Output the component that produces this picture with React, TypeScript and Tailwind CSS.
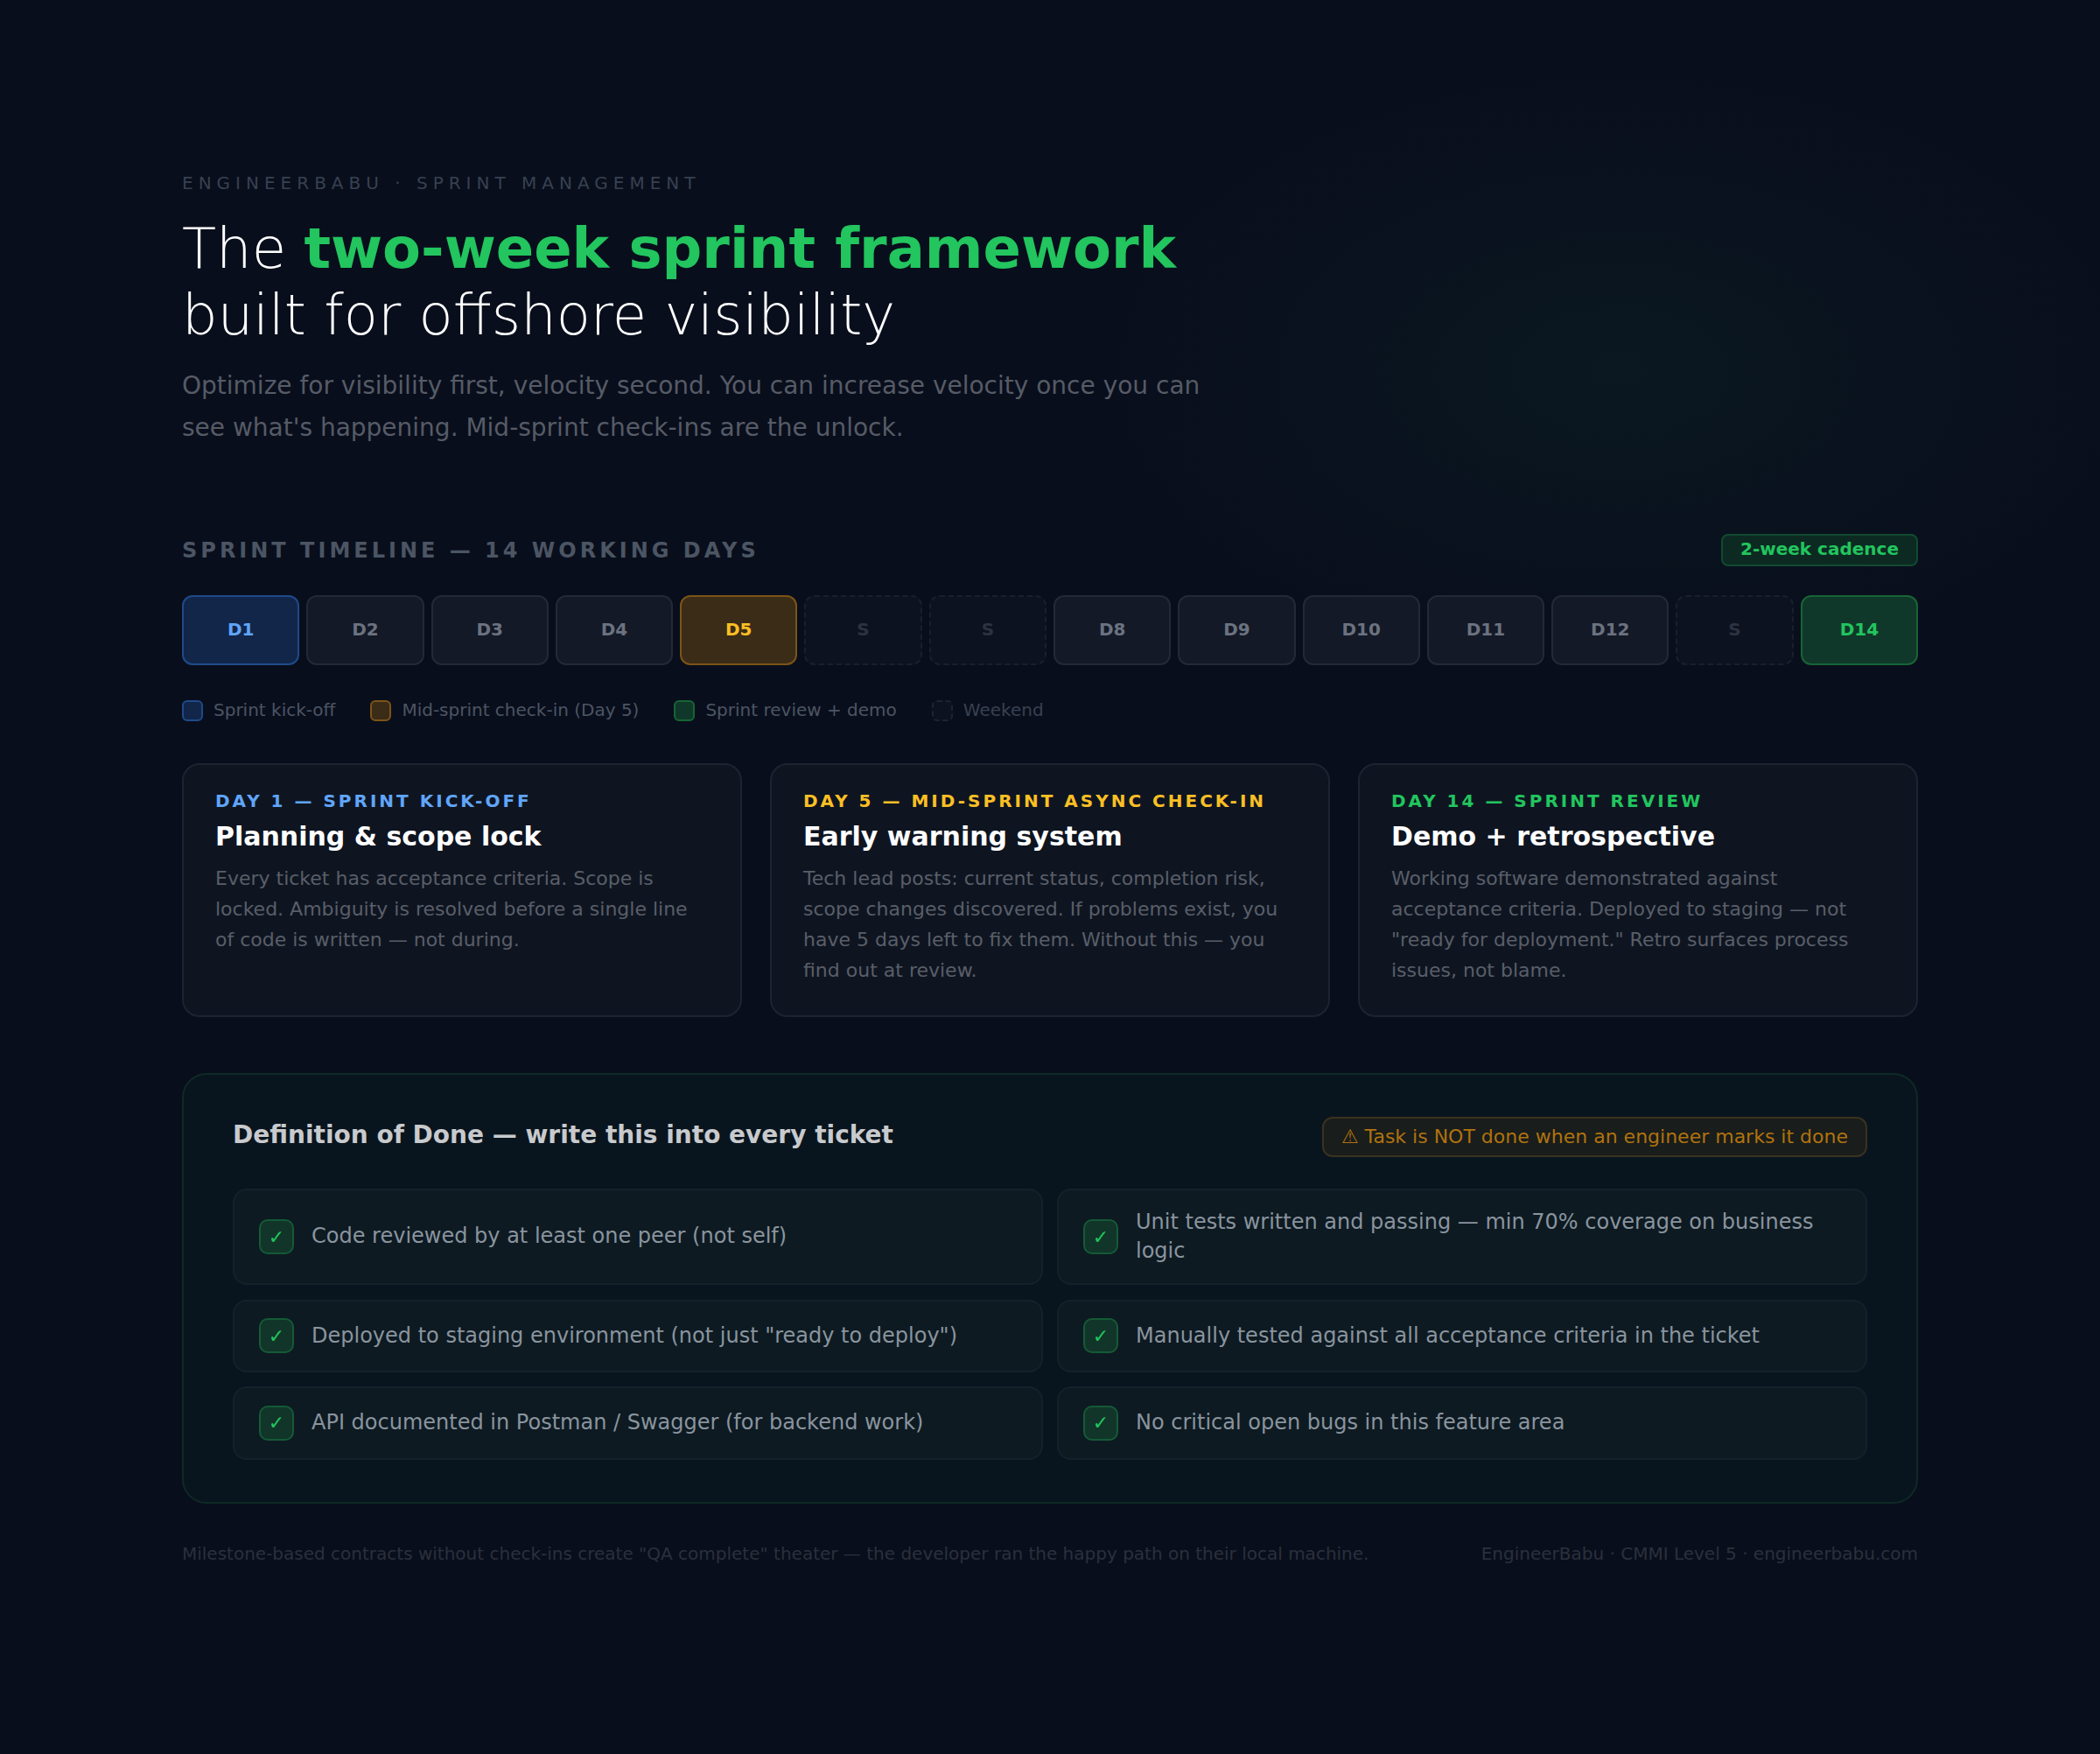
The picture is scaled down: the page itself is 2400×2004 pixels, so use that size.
const days = [
  { t: "D1", c: "border-[#1e4a8a] bg-[#12264a] text-[#60a5fa]" },
  { t: "D2", c: "border-[#232936] bg-[#131926] text-[#6b7280]" },
  { t: "D3", c: "border-[#232936] bg-[#131926] text-[#6b7280]" },
  { t: "D4", c: "border-[#232936] bg-[#131926] text-[#6b7280]" },
  { t: "D5", c: "border-[#7c5416] bg-[#3b2c18] text-[#fbbf24]" },
  { t: "S", c: "border-dashed border-[#1a1f2c] bg-[#0d1220] text-[#2c3240]" },
  { t: "S", c: "border-dashed border-[#1a1f2c] bg-[#0d1220] text-[#2c3240]" },
  { t: "D8", c: "border-[#232936] bg-[#131926] text-[#6b7280]" },
  { t: "D9", c: "border-[#232936] bg-[#131926] text-[#6b7280]" },
  { t: "D10", c: "border-[#232936] bg-[#131926] text-[#6b7280]" },
  { t: "D11", c: "border-[#232936] bg-[#131926] text-[#6b7280]" },
  { t: "D12", c: "border-[#232936] bg-[#131926] text-[#6b7280]" },
  { t: "S", c: "border-dashed border-[#1a1f2c] bg-[#0d1220] text-[#2c3240]" },
  { t: "D14", c: "border-[#166534] bg-[#10382a] text-[#22c55e]" },
];

const legend = [
  { t: "Sprint kick-off", c: "border-[#1e4a8a] bg-[#12264a]", x: "text-[#4b5563]" },
  { t: "Mid-sprint check-in (Day 5)", c: "border-[#7c5416] bg-[#3b2c18]", x: "text-[#4b5563]" },
  { t: "Sprint review + demo", c: "border-[#166534] bg-[#10382a]", x: "text-[#4b5563]" },
  { t: "Weekend", c: "border-dashed border-[#1f2430] bg-[#0d1220]", x: "text-[#374151]" },
];

const cards = [
  {
    l: "DAY 1 — SPRINT KICK-OFF",
    c: "text-[#60a5fa]",
    h: "Planning & scope lock",
    d: "Every ticket has acceptance criteria. Scope is locked. Ambiguity is resolved before a single line of code is written — not during.",
  },
  {
    l: "DAY 5 — MID-SPRINT ASYNC CHECK-IN",
    c: "text-[#fbbf24]",
    h: "Early warning system",
    d: "Tech lead posts: current status, completion risk, scope changes discovered. If problems exist, you have 5 days left to fix them. Without this — you find out at review.",
  },
  {
    l: "DAY 14 — SPRINT REVIEW",
    c: "text-[#22c55e]",
    h: "Demo + retrospective",
    d: 'Working software demonstrated against acceptance criteria. Deployed to staging — not "ready for deployment." Retro surfaces process issues, not blame.',
  },
];

const items = [
  "Code reviewed by at least one peer (not self)",
  "Unit tests written and passing — min 70% coverage on business logic",
  'Deployed to staging environment (not just "ready to deploy")',
  "Manually tested against all acceptance criteria in the ticket",
  "API documented in Postman / Swagger (for backend work)",
  "No critical open bugs in this feature area",
];

export default function App() {
  return (
    <div className="min-h-[2004px] bg-[#090e1c] bg-[radial-gradient(ellipse_600px_350px_at_1850px_424px,rgba(30,190,110,0.055),transparent)] px-[208px] pt-[197px] font-['DejaVu_Sans',sans-serif]">
      <div className="text-[20px] leading-[24px] tracking-[6px] text-[#374151]">ENGINEERBABU · SPRINT MANAGEMENT</div>
      <h1 className="mt-[25px] text-[64px] leading-[76px] font-extralight text-white">
        The <span className="font-bold text-[#22c55e]">two-week sprint framework</span>
        <br />
        built for offshore visibility
      </h1>
      <p className="mt-[19px] w-[1200px] text-[28px] leading-[48px] text-[#565b66]">
        Optimize for visibility first, velocity second. You can increase velocity once you can see what's happening. Mid-sprint check-ins are the unlock.
      </p>

      <div className="mt-[97px] flex h-[37px] items-center justify-between">
        <div className="pt-[1px] text-[24px] leading-[28px] font-bold tracking-[4px] text-[#4b5563]">SPRINT TIMELINE — 14 WORKING DAYS</div>
        <div className="rounded-[8px] border-2 border-[#124a30] bg-[#0c2a22] px-[20px] pt-[3px] pb-[6px] text-[20px] leading-[24px] font-bold text-[#22c55e]">2-week cadence</div>
      </div>

      <div className="mt-[33px] grid grid-cols-14 gap-[8px]">
        {days.map((d, i) => (
          <div key={i} className={`flex h-[80px] items-center justify-center rounded-[12px] border-2 pb-[2px] text-[20px] font-bold ${d.c}`}>
            {d.t}
          </div>
        ))}
      </div>

      <div className="mt-[40px] flex items-center gap-[40px]">
        {legend.map((l) => (
          <div key={l.t} className="flex items-center gap-[12px]">
            <span className={`h-[24px] w-[24px] rounded-[6px] border-2 ${l.c}`} />
            <span className={`pb-[1px] text-[20px] leading-[23px] ${l.x}`}>{l.t}</span>
          </div>
        ))}
      </div>

      <div className="mt-[48px] grid grid-cols-3 gap-[32px]">
        {cards.map((c) => (
          <div key={c.l} className="h-[290px] rounded-[20px] border-2 border-[#1d2330] bg-[#0e1521] px-[36px] pt-[28px]">
            <div className={`text-[20px] leading-[26px] font-bold tracking-[3px] ${c.c}`}>{c.l}</div>
            <div className="mt-[8px] text-[30px] leading-[40px] font-bold text-white">{c.h}</div>
            <div className="mt-[9.5px] text-[22px] leading-[35.2px] text-[#5a5e68]">{c.d}</div>
          </div>
        ))}
      </div>

      <div className="mt-[64px] rounded-[28px] border-2 border-[#0e2a26] bg-[#09151e] px-[56px] py-[48px]">
        <div className="flex items-start justify-between">
          <div className="text-[28px] leading-[42px] font-bold text-[#c8cacd]">Definition of Done — write this into every ticket</div>
          <div className="rounded-[12px] border-2 border-[#3a3220] bg-[#191d1b] px-[20px] py-[8px] text-[22px] leading-[26px] text-[#b0720f]">⚠ Task is NOT done when an engineer marks it done</div>
        </div>
        <div className="mt-[36px] grid grid-cols-2 gap-x-[16px] gap-y-[16.4px]">
          {items.map((t) => (
            <div key={t} className="flex items-center gap-[20px] rounded-[16px] border-2 border-[#14212b] bg-[#0d1a22] px-[28px] py-[19.6px]">
              <span className="flex h-[40px] w-[40px] shrink-0 items-center justify-center rounded-[10px] border-2 border-[#145a36] bg-[#12352a] text-[22px] text-[#22c55e]">✓</span>
              <span className="text-[24px] leading-[33.6px] text-[#8a949e]">{t}</span>
            </div>
          ))}
        </div>
      </div>

      <div className="mt-[45px] flex items-center justify-between text-[20px] leading-[24px] text-[#2b303c]">
        <span>Milestone-based contracts without check-ins create "QA complete" theater — the developer ran the happy path on their local machine.</span>
        <span>EngineerBabu · CMMI Level 5 · engineerbabu.com</span>
      </div>
    </div>
  );
}
